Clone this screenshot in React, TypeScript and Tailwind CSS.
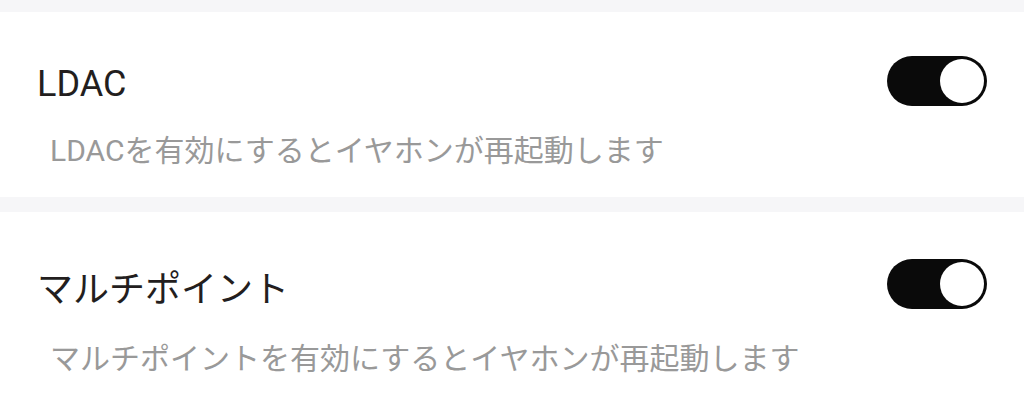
import { useState } from "react";

const settings = [
  { id: "ldac", title: "LDAC", desc: "LDACを有効にするとイヤホンが再起動します", latin: true },
  { id: "multipoint", title: "マルチポイント", desc: "マルチポイントを有効にするとイヤホンが再起動します", latin: false },
];

function Toggle({ on, onClick }: { on: boolean; onClick: () => void }) {
  return (
    <button
      onClick={onClick}
      className={`flex h-[50px] w-[100px] shrink-0 items-center rounded-full p-[3px] ${
        on ? "justify-end bg-[#0a0a0a]" : "justify-start bg-[#d4d4d8]"
      }`}
    >
      <span className="block h-[44px] w-[44px] rounded-full bg-white" />
    </button>
  );
}

export default function App() {
  const [enabled, setEnabled] = useState<Record<string, boolean>>({ ldac: true, multipoint: true });

  return (
    <div
      className="flex min-h-screen flex-col gap-[15px] bg-[#f6f6f8] pt-[12px]"
      style={{ fontFamily: 'Roboto, "Noto Sans CJK JP", sans-serif' }}
    >
      {settings.map((s) => (
        <section
          key={s.id}
          className="bg-white px-[37px] pt-[47px] pb-[26px] first:pt-[44px] last:grow"
        >
          <div className="flex items-start justify-between">
            <h2
              className={`text-[36px] font-normal leading-[50px] text-[#231e1e] ${
                s.latin ? "mt-[3px]" : "mt-[6px]"
              }`}
            >
              {s.title}
            </h2>
            <Toggle
              on={enabled[s.id]}
              onClick={() => setEnabled((prev) => ({ ...prev, [s.id]: !prev[s.id] }))}
            />
          </div>
          <p
            className={`ml-[13px] text-[30px] leading-[40px] text-[#999999] ${
              s.latin ? "mt-[22px]" : "mt-[24px]"
            }`}
          >
            {s.desc}
          </p>
        </section>
      ))}
    </div>
  );
}
